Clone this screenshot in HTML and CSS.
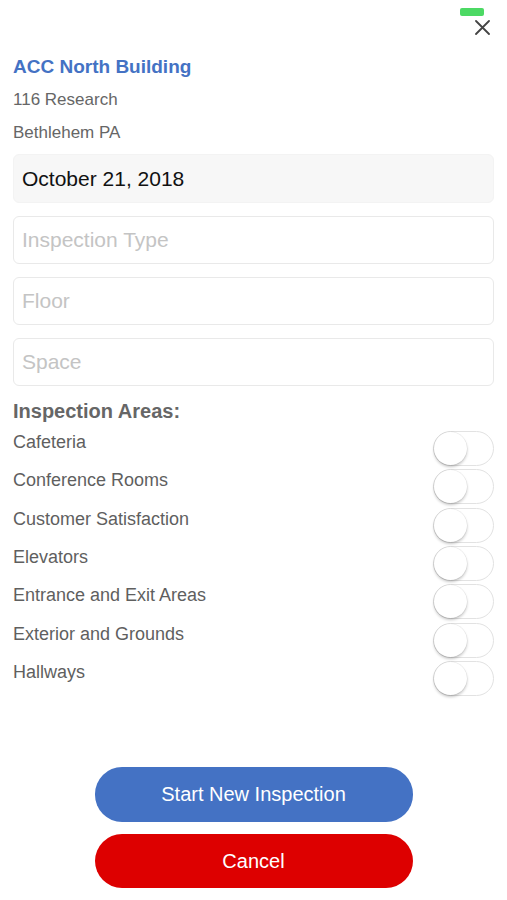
FILE: index.html
```html
<!DOCTYPE html>
<html>
<head>
    <title>New Inspection</title>
    <meta charset="utf-8">
    <link rel="stylesheet" href="styles.css">
</head>
<body>
<div class="screen">
    <div class="topbar">
        <div class="status-pill"></div>
        <div class="close">
            <svg width="15" height="15" viewBox="0 0 15 15">
                <path d="M1 1 L14 14 M14 1 L1 14" stroke="#444" stroke-width="1.8" fill="none" stroke-linecap="round"/>
            </svg>
        </div>
    </div>

    <div class="building">
        <div class="building-name">ACC North Building</div>
        <div class="building-line">116 Research</div>
        <div class="building-line">Bethlehem PA</div>
    </div>

    <div class="fields">
        <div class="field field-date">October 21, 2018</div>
        <div class="field placeholder">Inspection Type</div>
        <div class="field placeholder">Floor</div>
        <div class="field placeholder">Space</div>
    </div>

    <div class="areas-title">Inspection Areas:</div>
    <div class="areas">
        <div class="area"><span>Cafeteria</span><div class="toggle"><div class="knob"></div></div></div>
        <div class="area"><span>Conference Rooms</span><div class="toggle"><div class="knob"></div></div></div>
        <div class="area"><span>Customer Satisfaction</span><div class="toggle"><div class="knob"></div></div></div>
        <div class="area"><span>Elevators</span><div class="toggle"><div class="knob"></div></div></div>
        <div class="area"><span>Entrance and Exit Areas</span><div class="toggle"><div class="knob"></div></div></div>
        <div class="area"><span>Exterior and Grounds</span><div class="toggle"><div class="knob"></div></div></div>
        <div class="area"><span>Hallways</span><div class="toggle"><div class="knob"></div></div></div>
    </div>

    <div class="actions">
        <div class="btn btn-start">Start New Inspection</div>
        <div class="btn btn-cancel">Cancel</div>
    </div>
</div>
</body>
</html>
```

FILE: styles.css
```css
body {
    margin: 0;
    background: #fff;
    font-family: "Liberation Sans", Arial, sans-serif;
}

.screen {
    width: 507px;
    height: 900px;
    box-sizing: border-box;
    padding: 0 13px;
    display: flex;
    flex-direction: column;
}

/* top right: little green pill sitting over the close cross */
.topbar {
    height: 50px;
    display: flex;
    flex-direction: column;
    align-items: flex-end;
}

.status-pill {
    width: 24px;
    height: 8px;
    margin-top: 8px;
    margin-right: 10px;
    background: #4cd964;
    border-radius: 2px;
}

.close {
    width: 15px;
    height: 15px;
    margin-top: 4px;
    margin-right: 4px;
}

.close svg {
    display: block;
}

.building-name {
    font-size: 19px;
    font-weight: bold;
    line-height: 33px;
    color: #4472c4;
}

.building-line {
    font-size: 17px;
    line-height: 33px;
    color: #666;
}

.fields {
    display: flex;
    flex-direction: column;
    gap: 13px;
    margin-top: 5px;
}

.field {
    height: 48px;
    box-sizing: border-box;
    border: 1px solid #e9e9e9;
    border-radius: 6px;
    padding-left: 8px;
    display: flex;
    align-items: center;
    font-size: 21px;
    color: #111;
}

.field-date {
    height: 49px;
    background: #f7f7f7;
    border-color: #f3f3f3;
}

.placeholder {
    color: #c4c4c4;
}

.areas-title {
    margin-top: 12px;
    font-size: 20px;
    font-weight: bold;
    line-height: 26px;
    color: #666;
}

.areas {
    margin-top: 6px;
}

.area {
    height: 38.33px;
    display: flex;
    justify-content: space-between;
    align-items: flex-start;
    font-size: 18px;
    line-height: 24px;
    color: #5f5f5f;
}

.toggle {
    width: 61px;
    height: 35px;
    margin-top: 1px;
    box-sizing: border-box;
    border: 1.5px solid #e2e2e2;
    border-radius: 18px;
    background: #fff;
    display: flex;
    align-items: center;
}

.knob {
    width: 33px;
    height: 33px;
    border-radius: 50%;
    background: #fff;
    box-shadow: 0 2px 3px rgba(0, 0, 0, 0.22), 0 0 0 0.5px rgba(0, 0, 0, 0.08);
}

.actions {
    margin-top: auto;
    margin-bottom: 12px;
    display: flex;
    flex-direction: column;
    align-items: center;
    gap: 12px;
}

.btn {
    width: 318px;
    height: 54px;
    border-radius: 27px;
    display: flex;
    align-items: center;
    justify-content: center;
    font-size: 20px;
    color: #fff;
}

.btn-start {
    height: 55px;
    background: #4472c4;
}

.btn-cancel {
    background: #dd0000;
}
```
